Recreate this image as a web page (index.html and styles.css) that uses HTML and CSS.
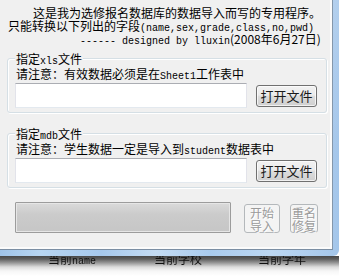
FILE: index.html
```html
<!DOCTYPE html>
<html>
<head>
<meta charset="utf-8">
<link rel="stylesheet" href="styles.css">
</head>
<body>
<div class="screen">
  <div class="frame">
    <div class="dialog">
      <div class="intro">
        <div class="line l1">这是我为选修报名数据库的数据导入而写的专用程序。</div>
        <div class="line l2">只能转换以下列出的字段<span class="mono">(name,sex,grade,class,no,pwd)</span></div>
        <div class="line l3"><span class="mono">------ designed by lluxin</span>(2008年6月27日)</div>
      </div>

      <div class="group g1">
        <div class="group-title">指定<span class="mono">xls</span>文件</div>
        <div class="line note">请注意：有效数据必须是在<span class="mono">Sheet1</span>工作表中</div>
        <div class="row">
          <div class="textbox"></div>
          <div class="btn">打开文件</div>
        </div>
      </div>

      <div class="group g2">
        <div class="group-title">指定<span class="mono">mdb</span>文件</div>
        <div class="line note">请注意：学生数据一定是导入到<span class="mono">student</span>数据表中</div>
        <div class="row">
          <div class="textbox"></div>
          <div class="btn">打开文件</div>
        </div>
      </div>

      <div class="bottom-row">
        <div class="progress"></div>
        <div class="btn-off b-start"><span>开始</span><span>导入</span></div>
        <div class="btn-off b-fix"><span>重名</span><span>修复</span></div>
      </div>
    </div>
  </div>
  <div class="under">
    <span class="u1">当前<span class="mono">name</span></span>
    <span class="u2">当前学校</span>
    <span class="u3">当前学年</span>
  </div>
</div>
</body>
</html>
```

FILE: styles.css
```css
* { box-sizing: border-box; }

html, body {
  margin: 0;
  padding: 0;
  background: #ffffff;
}

body {
  width: 339px;
  height: 276px;
  overflow: hidden;
  font-family: "Noto Sans CJK SC", "Noto Sans", sans-serif;
  font-size: 12px;
  color: #000;
}

.screen {
  width: 339px;
  height: 276px;
  display: flex;
  flex-direction: column;
}

.frame {
  width: 339px;
  height: 256px;
  flex: none;
  padding: 0 6px 6px 0;
  border-bottom-right-radius: 6px;
  background:
    linear-gradient(180deg, rgba(255,255,255,0.15), rgba(255,255,255,0) 60%),
    linear-gradient(90deg, #9fc3e8 0, #b8d6f2 12%, #a6c8ec 30%, #c4dcf4 46%, #a9cbee 62%, #bcd7f2 80%, #a4c6ea 100%);
}

.dialog {
  width: 333px;
  height: 250px;
  background: #f0f0f0;
  border-right: 1px solid #8497ab;
  border-bottom: 1px solid #7b8ea3;
  box-shadow: inset -2px -2px 0 #fbfbfb;
  display: flex;
  flex-direction: column;
}

.line {
  height: 13px;
  line-height: 13px;
  white-space: nowrap;
}

.mono {
  font-family: "Liberation Mono", monospace;
  font-size: 10px;
}

.intro {
  padding-top: 6px;
}

.l1 { padding-left: 33px; }
.l2 { padding-left: 8px; }
.l3 { padding-left: 80px; }

.group {
  width: 320px;
  height: 55px;
  margin-left: 7px;
  border: 1px solid #d5dfe5;
  border-radius: 3px;
  box-shadow: inset 1px 1px 0 #ffffff, 1px 1px 0 #ffffff;
  padding: 0 0 0 7px;
  flex: none;
}

.g1 { margin-top: 13px; }
.g2 { margin-top: 20px; }

.group-title {
  display: block;
  width: max-content;
  height: 13px;
  line-height: 13px;
  margin-top: -7px;
  padding: 0 1px;
  background: #f0f0f0;
  white-space: nowrap;
}

.note {
  margin-top: 2px;
  padding-left: 1px;
}

.row {
  display: flex;
  align-items: center;
  gap: 9px;
  margin-top: 3px;
}

.textbox {
  width: 232px;
  height: 25px;
  background: #ffffff;
  border: 1px solid #e2e3ea;
  border-top-color: #abadb3;
  border-bottom-color: #e3e9ef;
}

.btn {
  width: 61px;
  height: 22px;
  border: 1px solid #707070;
  border-radius: 3px;
  background: linear-gradient(180deg, #f2f2f2 0%, #ebebeb 46%, #dddddd 50%, #cfcfcf 100%);
  box-shadow: inset 0 0 0 1px rgba(255,255,255,0.7);
  font-size: 13px;
  line-height: 20px;
  text-align: center;
  color: #1a1a1a;
  white-space: nowrap;
}

.bottom-row {
  display: flex;
  align-items: flex-end;
  padding-left: 15px;
  margin-top: 14px;
}

.progress {
  width: 216px;
  height: 31px;
  border: 1px solid #9c9c9c;
  border-radius: 1px;
  background: linear-gradient(180deg, #dadada 0%, #cbcbcb 40%, #c6c6c6 100%);
  box-shadow: inset 0 0 0 1px #e6e6e6;
}

.btn-off {
  height: 29px;
  border: 1px solid #b4b8bb;
  border-radius: 3px;
  background: #f4f4f4;
  color: #9a9a9a;
  text-shadow: 1px 1px 0 #ffffff;
  font-size: 12px;
  line-height: 13px;
  display: flex;
  flex-direction: column;
  align-items: center;
  justify-content: center;
  white-space: nowrap;
}

.b-start {
  width: 36px;
  margin-left: 13px;
}

.b-fix {
  width: 28px;
  margin-left: 10px;
}

.under {
  height: 20px;
  overflow: hidden;
  display: flex;
  align-items: flex-start;
  background: linear-gradient(180deg, #474747 0px, #5e5e5e 3px, #9a9a9a 7px, #dcdcdc 11px, #f6f6f6 15px, #ffffff 20px);
  filter: blur(0.4px);
}

.under span {
  color: #101010;
}

.under > span {
  margin-top: -4px;
  line-height: 13px;
  white-space: nowrap;
}

.u1 { margin-left: 48px; }
.u2 { margin-left: 58px; }
.u3 { margin-left: 56px; }
```
